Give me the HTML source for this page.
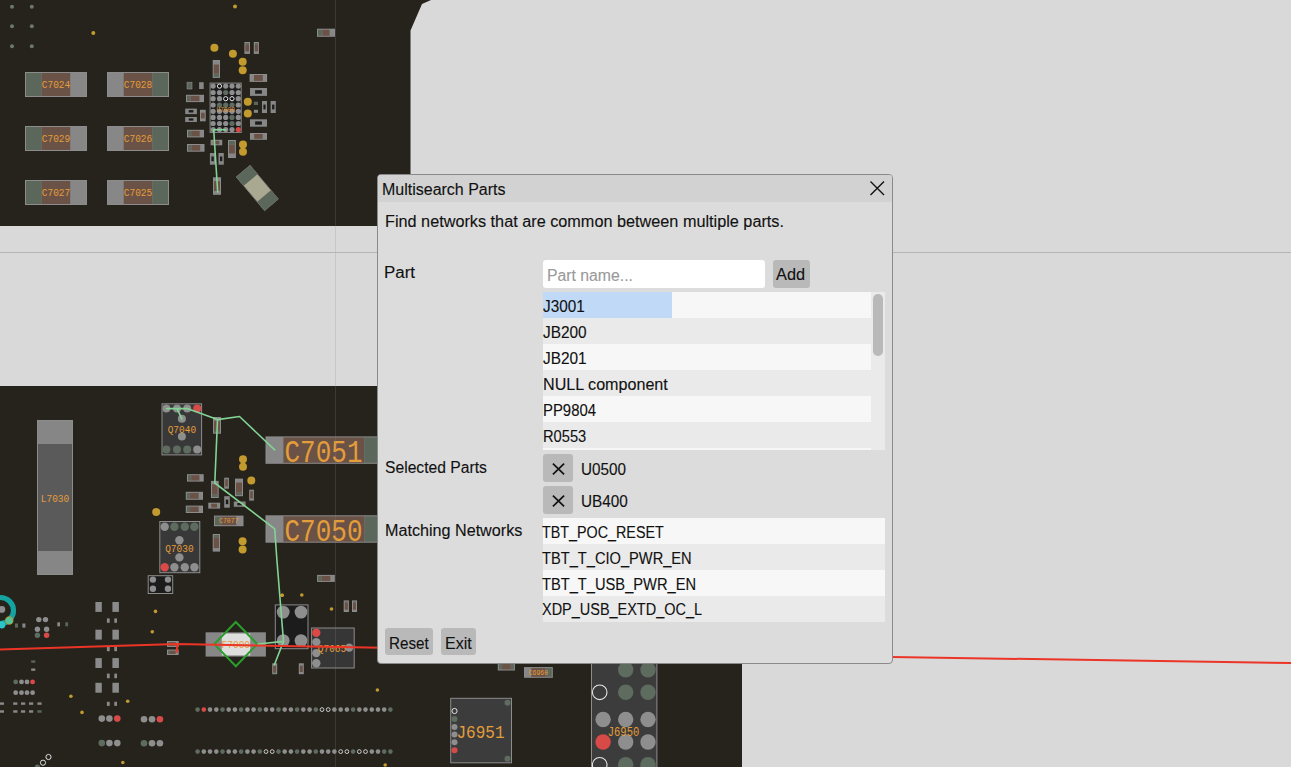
<!DOCTYPE html>
<html><head><meta charset="utf-8">
<style>
html,body{margin:0;padding:0;width:1291px;height:767px;overflow:hidden;background:#d9d9d9;font-family:"Liberation Sans",sans-serif;}
#pcb{position:absolute;left:0;top:0;}
.dlg{position:absolute;left:377px;top:174px;width:514px;height:488px;background:#dcdcdc;border:1px solid #8a8a8a;border-radius:4px;}
.tb{position:absolute;left:0;top:0;width:514px;height:27px;background:#d2d2d2;border-radius:3px 3px 0 0;}
.t{position:absolute;white-space:nowrap;color:#111;font-size:16px;line-height:16px;transform-origin:0 0;-webkit-text-stroke-width:0.12px;}
.btn{position:absolute;background:#b9b9b9;border-radius:3px;}
.row{position:absolute;height:26px;}
</style></head><body>
<svg id="pcb" width="1291" height="767" viewBox="0 0 1291 767">
  <!-- PCB blocks -->
  <polygon points="0,0 431,0 422,4 410.5,30.5 410.5,226 0,226" fill="#26231d"/>
  <rect x="0" y="386" width="742" height="381" fill="#26231d"/>
  <g id="parts">
<circle cx="12.0" cy="6.7" r="2" fill="#6c786d"/>
<circle cx="12.0" cy="26.3" r="2" fill="#6c786d"/>
<circle cx="12.0" cy="46.2" r="2" fill="#6c786d"/>
<circle cx="31.8" cy="6.7" r="2" fill="#6c786d"/>
<circle cx="31.8" cy="26.3" r="2" fill="#6c786d"/>
<circle cx="31.8" cy="46.2" r="2" fill="#6c786d"/>
<circle cx="93.3" cy="32.9" r="2" fill="#c29a2e"/>
<circle cx="235.0" cy="6.5" r="2" fill="#c29a2e"/>
<rect x="25.0" y="72.0" width="62.0" height="25.0" fill="#8c8c8c"/>
<rect x="26.0" y="73.0" width="15.7" height="23.0" fill="#5c675c"/>
<rect x="70.3" y="73.0" width="15.7" height="23.0" fill="#878787"/>
<rect x="41.7" y="73.0" width="28.5" height="23.0" fill="#6b5246"/>
<text transform="translate(56.0,87.9) scale(1,1.18)" font-family="Liberation Mono" font-size="9.5" fill="#e39d3a" text-anchor="middle" >C7024</text>
<rect x="107.0" y="72.0" width="62.0" height="25.0" fill="#8c8c8c"/>
<rect x="108.0" y="73.0" width="15.7" height="23.0" fill="#878787"/>
<rect x="152.3" y="73.0" width="15.7" height="23.0" fill="#5c675c"/>
<rect x="123.7" y="73.0" width="28.5" height="23.0" fill="#6b5246"/>
<text transform="translate(138.0,87.9) scale(1,1.18)" font-family="Liberation Mono" font-size="9.5" fill="#e39d3a" text-anchor="middle" >C7028</text>
<rect x="25.0" y="126.0" width="62.0" height="25.0" fill="#8c8c8c"/>
<rect x="26.0" y="127.0" width="15.7" height="23.0" fill="#5c675c"/>
<rect x="70.3" y="127.0" width="15.7" height="23.0" fill="#878787"/>
<rect x="41.7" y="127.0" width="28.5" height="23.0" fill="#6b5246"/>
<text transform="translate(56.0,141.9) scale(1,1.18)" font-family="Liberation Mono" font-size="9.5" fill="#e39d3a" text-anchor="middle" >C7029</text>
<rect x="107.0" y="126.0" width="62.0" height="25.0" fill="#8c8c8c"/>
<rect x="108.0" y="127.0" width="15.7" height="23.0" fill="#878787"/>
<rect x="152.3" y="127.0" width="15.7" height="23.0" fill="#5c675c"/>
<rect x="123.7" y="127.0" width="28.5" height="23.0" fill="#6b5246"/>
<text transform="translate(138.0,141.9) scale(1,1.18)" font-family="Liberation Mono" font-size="9.5" fill="#e39d3a" text-anchor="middle" >C7026</text>
<rect x="25.0" y="180.0" width="62.0" height="25.0" fill="#8c8c8c"/>
<rect x="26.0" y="181.0" width="15.7" height="23.0" fill="#5c675c"/>
<rect x="70.3" y="181.0" width="15.7" height="23.0" fill="#878787"/>
<rect x="41.7" y="181.0" width="28.5" height="23.0" fill="#6b5246"/>
<text transform="translate(56.0,195.9) scale(1,1.18)" font-family="Liberation Mono" font-size="9.5" fill="#e39d3a" text-anchor="middle" >C7027</text>
<rect x="107.0" y="180.0" width="62.0" height="25.0" fill="#8c8c8c"/>
<rect x="108.0" y="181.0" width="15.7" height="23.0" fill="#878787"/>
<rect x="152.3" y="181.0" width="15.7" height="23.0" fill="#5c675c"/>
<rect x="123.7" y="181.0" width="28.5" height="23.0" fill="#6b5246"/>
<text transform="translate(138.0,195.9) scale(1,1.18)" font-family="Liberation Mono" font-size="9.5" fill="#e39d3a" text-anchor="middle" >C7025</text>
<rect x="317.0" y="28.7" width="18.0" height="8.1" fill="#8c8c8c"/>
<rect x="318.0" y="29.7" width="4.4" height="6.1" fill="#5c675c"/>
<rect x="329.6" y="29.7" width="4.4" height="6.1" fill="#878787"/>
<rect x="322.4" y="29.7" width="7.2" height="6.1" fill="#6b5246"/>
<circle cx="214.4" cy="47.7" r="4" fill="#c29a2e"/>
<circle cx="232.9" cy="53.7" r="4" fill="#c29a2e"/>
<circle cx="242.7" cy="61.8" r="4" fill="#c29a2e"/>
<circle cx="242.7" cy="70.2" r="4" fill="#c29a2e"/>
<rect x="244.4" y="42.0" width="5.6" height="11.9" fill="#8c8c8c"/>
<rect x="245.4" y="43.0" width="3.6" height="1.4" fill="#5c675c"/>
<rect x="245.4" y="51.5" width="3.6" height="1.4" fill="#878787"/>
<rect x="245.4" y="44.4" width="3.6" height="7.1" fill="#6b5246"/>
<rect x="253.8" y="42.0" width="5.1" height="11.9" fill="#8c8c8c"/>
<rect x="254.8" y="43.0" width="3.1" height="1.4" fill="#5c675c"/>
<rect x="254.8" y="51.5" width="3.1" height="1.4" fill="#878787"/>
<rect x="254.8" y="44.4" width="3.1" height="7.1" fill="#6b5246"/>
<rect x="212.7" y="60.0" width="7.3" height="17.9" fill="#8c8c8c"/>
<rect x="213.7" y="61.0" width="5.3" height="3.5" fill="#878787"/>
<rect x="213.7" y="73.4" width="5.3" height="3.5" fill="#5c675c"/>
<rect x="213.7" y="64.5" width="5.3" height="9.0" fill="#6b5246"/>
<rect x="249.6" y="74.0" width="17.5" height="7.9" fill="#8c8c8c"/>
<rect x="250.6" y="75.0" width="3.4" height="5.9" fill="#878787"/>
<rect x="262.7" y="75.0" width="3.4" height="5.9" fill="#878787"/>
<rect x="254.0" y="75.0" width="8.8" height="5.9" fill="#6b5246"/>
<rect x="187.0" y="82.2" width="5.0" height="6.8" fill="#5c675c" stroke="#8c8c8c" stroke-width="0.6"/>
<rect x="199.1" y="82.2" width="4.6" height="6.8" fill="#878787"/>
<rect x="186.0" y="94.8" width="18.0" height="7.3" fill="#8c8c8c"/>
<rect x="187.0" y="95.8" width="3.5" height="5.3" fill="#5c675c"/>
<rect x="199.5" y="95.8" width="3.5" height="5.3" fill="#878787"/>
<rect x="190.5" y="95.8" width="9.0" height="5.3" fill="#6b5246"/>
<rect x="185.2" y="108.6" width="11.7" height="5.5" fill="#878787"/>
<rect x="188.7" y="110.1" width="4.7" height="2.4" fill="#1c1c1c"/>
<rect x="185.2" y="117.0" width="11.7" height="5.0" fill="#878787"/>
<rect x="188.7" y="118.4" width="4.7" height="2.2" fill="#1c1c1c"/>
<rect x="200.0" y="109.8" width="5.7" height="11.5" fill="#8c8c8c"/>
<rect x="201.0" y="110.8" width="3.7" height="1.9" fill="#878787"/>
<rect x="201.0" y="118.4" width="3.7" height="1.9" fill="#878787"/>
<rect x="201.0" y="112.7" width="3.7" height="5.8" fill="#6b5246"/>
<rect x="250.0" y="88.0" width="17.0" height="7.9" fill="#878787"/>
<rect x="255.1" y="90.2" width="6.8" height="3.5" fill="#1c1c1c"/>
<circle cx="247.8" cy="101.7" r="4" fill="#c29a2e"/>
<circle cx="247.8" cy="113.5" r="4" fill="#c29a2e"/>
<rect x="253.9" y="101.7" width="4.1" height="3.3" fill="#5c675c"/>
<rect x="253.9" y="109.8" width="4.1" height="3.0" fill="#878787"/>
<rect x="262.0" y="101.0" width="5.0" height="12.0" fill="#878787"/>
<rect x="263.4" y="104.6" width="2.2" height="4.8" fill="#1c1c1c"/>
<rect x="270.6" y="101.0" width="5.2" height="12.0" fill="#878787"/>
<rect x="272.1" y="104.6" width="2.3" height="4.8" fill="#1c1c1c"/>
<rect x="250.0" y="119.3" width="17.0" height="7.4" fill="#878787"/>
<rect x="255.1" y="121.4" width="6.8" height="3.3" fill="#1c1c1c"/>
<rect x="250.0" y="133.0" width="17.0" height="6.8" fill="#8c8c8c"/>
<rect x="251.0" y="134.0" width="3.2" height="4.8" fill="#878787"/>
<rect x="262.8" y="134.0" width="3.2" height="4.8" fill="#878787"/>
<rect x="254.2" y="134.0" width="8.5" height="4.8" fill="#6b5246"/>
<rect x="187.0" y="129.8" width="17.0" height="7.6" fill="#8c8c8c"/>
<rect x="188.0" y="130.8" width="3.2" height="5.6" fill="#5c675c"/>
<rect x="199.8" y="130.8" width="3.2" height="5.6" fill="#878787"/>
<rect x="191.2" y="130.8" width="8.5" height="5.6" fill="#6b5246"/>
<rect x="187.0" y="144.0" width="17.5" height="7.7" fill="#8c8c8c"/>
<rect x="188.0" y="145.0" width="3.4" height="5.7" fill="#5c675c"/>
<rect x="200.1" y="145.0" width="3.4" height="5.7" fill="#878787"/>
<rect x="191.4" y="145.0" width="8.8" height="5.7" fill="#6b5246"/>
<rect x="210.6" y="139.8" width="11.6" height="5.5" fill="#8c8c8c"/>
<rect x="211.6" y="140.8" width="1.9" height="3.5" fill="#878787"/>
<rect x="219.3" y="140.8" width="1.9" height="3.5" fill="#878787"/>
<rect x="213.5" y="140.8" width="5.8" height="3.5" fill="#6b5246"/>
<rect x="228.0" y="140.0" width="7.9" height="18.0" fill="#8c8c8c"/>
<rect x="229.0" y="141.0" width="5.9" height="3.5" fill="#5c675c"/>
<rect x="229.0" y="153.5" width="5.9" height="3.5" fill="#878787"/>
<rect x="229.0" y="144.5" width="5.9" height="9.0" fill="#6b5246"/>
<circle cx="243.0" cy="144.6" r="4" fill="#c29a2e"/>
<circle cx="243.0" cy="151.7" r="4" fill="#c29a2e"/>
<rect x="209.9" y="153.0" width="5.5" height="11.7" fill="#878787"/>
<rect x="211.4" y="156.5" width="2.4" height="4.7" fill="#1c1c1c"/>
<rect x="218.5" y="153.0" width="5.3" height="11.7" fill="#878787"/>
<rect x="220.0" y="156.5" width="2.3" height="4.7" fill="#1c1c1c"/>
<rect x="213.0" y="177.3" width="8.0" height="17.5" fill="#8c8c8c"/>
<rect x="214.0" y="178.3" width="6.0" height="2.8" fill="#878787"/>
<rect x="214.0" y="191.0" width="6.0" height="2.8" fill="#878787"/>
<rect x="214.0" y="181.2" width="6.0" height="9.8" fill="#6b5246"/>
<rect x="210.1" y="83.1" width="31.1" height="49.3" fill="#1c1c1c" stroke="#8c8c8c" stroke-width="1"/>
<circle cx="213.1" cy="86.1" r="2.6" fill="#8e8e8e"/>
<circle cx="219.5" cy="86.1" r="2.1" fill="#111" stroke="#e8e8e8" stroke-width="1"/>
<circle cx="225.7" cy="86.1" r="2.6" fill="#8e8e8e"/>
<circle cx="232.0" cy="86.1" r="2.6" fill="#8e8e8e"/>
<circle cx="238.3" cy="86.1" r="2.6" fill="#8e8e8e"/>
<circle cx="213.1" cy="92.5" r="2.6" fill="#8e8e8e"/>
<circle cx="219.5" cy="92.5" r="2.6" fill="#8e8e8e"/>
<circle cx="225.7" cy="92.5" r="2.6" fill="#5e6b5f"/>
<circle cx="232.0" cy="92.5" r="2.6" fill="#8e8e8e"/>
<circle cx="238.3" cy="92.5" r="2.6" fill="#8e8e8e"/>
<circle cx="213.1" cy="98.7" r="2.6" fill="#8e8e8e"/>
<circle cx="219.5" cy="98.7" r="2.6" fill="#8e8e8e"/>
<circle cx="225.7" cy="98.7" r="2.1" fill="#111" stroke="#e8e8e8" stroke-width="1"/>
<circle cx="232.0" cy="98.7" r="2.1" fill="#111" stroke="#e8e8e8" stroke-width="1"/>
<circle cx="238.3" cy="98.7" r="2.6" fill="#8e8e8e"/>
<circle cx="213.1" cy="105.0" r="2.6" fill="#8e8e8e"/>
<circle cx="219.5" cy="105.0" r="2.6" fill="#5e6b5f"/>
<circle cx="225.7" cy="105.0" r="2.6" fill="#5e6b5f"/>
<circle cx="232.0" cy="105.0" r="2.6" fill="#5e6b5f"/>
<circle cx="238.3" cy="105.0" r="2.6" fill="#8e8e8e"/>
<circle cx="213.1" cy="111.3" r="2.6" fill="#8e8e8e"/>
<circle cx="219.5" cy="111.3" r="2.6" fill="#8e8e8e"/>
<circle cx="225.7" cy="111.3" r="2.6" fill="#8e8e8e"/>
<circle cx="232.0" cy="111.3" r="2.6" fill="#8e8e8e"/>
<circle cx="238.3" cy="111.3" r="2.6" fill="#8e8e8e"/>
<circle cx="213.1" cy="117.4" r="2.6" fill="#8e8e8e"/>
<circle cx="219.5" cy="117.4" r="2.6" fill="#8e8e8e"/>
<circle cx="225.7" cy="117.4" r="2.6" fill="#8e8e8e"/>
<circle cx="232.0" cy="117.4" r="2.6" fill="#5e6b5f"/>
<circle cx="238.3" cy="117.4" r="2.6" fill="#8e8e8e"/>
<circle cx="213.1" cy="123.5" r="2.6" fill="#8e8e8e"/>
<circle cx="219.5" cy="123.5" r="2.6" fill="#8e8e8e"/>
<circle cx="225.7" cy="123.5" r="2.6" fill="#8e8e8e"/>
<circle cx="232.0" cy="123.5" r="2.6" fill="#5e6b5f"/>
<circle cx="238.3" cy="123.5" r="2.6" fill="#8e8e8e"/>
<circle cx="213.1" cy="129.6" r="2.6" fill="#8e8e8e"/>
<circle cx="219.5" cy="129.6" r="2.6" fill="#8e8e8e"/>
<circle cx="225.7" cy="129.6" r="2.6" fill="#8e8e8e"/>
<circle cx="232.0" cy="129.6" r="2.6" fill="#8e8e8e"/>
<circle cx="238.3" cy="129.6" r="2.6" fill="#dd4444"/>
<text transform="translate(225.7,111.5) scale(1,1.18)" font-family="Liberation Mono" font-size="6.2" fill="#e39d3a" text-anchor="middle" >U7000</text>
<polyline points="225.9,129.8 213.7,129.8 217.7,192.0" fill="none" stroke="#82d394" stroke-width="1.6" stroke-linejoin="round" stroke-linecap="round"/>
<g transform="translate(257.3,188) rotate(50)"><rect x="-22" y="-9" width="44" height="18" fill="#a9a891" stroke="#777" stroke-width="0.8"/><rect x="-22" y="-9" width="11.5" height="18" fill="#5c675c"/><rect x="10.5" y="-9" width="11.5" height="18" fill="#5c675c"/></g>
<rect x="37.0" y="420.0" width="36.0" height="155.0" fill="#8c8c8c"/>
<rect x="38.0" y="421.0" width="34.0" height="23.0" fill="#868686"/>
<rect x="38.0" y="551.0" width="34.0" height="23.0" fill="#868686"/>
<rect x="38.0" y="444.0" width="34.0" height="107.0" fill="#5a5a5a"/>
<text transform="translate(55.0,502.0) scale(1,1.18)" font-family="Liberation Mono" font-size="9.5" fill="#e39d3a" text-anchor="middle" >L7030</text>
<rect x="162.0" y="403.8" width="39.6" height="51.1" fill="#383838" stroke="#8c8c8c" stroke-width="1"/>
<circle cx="166.4" cy="408.6" r="4" fill="#8e8e8e"/>
<circle cx="177.0" cy="408.6" r="4" fill="#8e8e8e"/>
<circle cx="187.2" cy="408.6" r="4" fill="#8e8e8e"/>
<circle cx="197.2" cy="408.6" r="4" fill="#d84a48"/>
<circle cx="166.4" cy="449.6" r="4" fill="#5e6b5f"/>
<circle cx="177.0" cy="449.6" r="4" fill="#5e6b5f"/>
<circle cx="187.2" cy="449.6" r="4" fill="#5e6b5f"/>
<circle cx="197.2" cy="449.6" r="4" fill="#8e8e8e"/>
<circle cx="181.9" cy="418.8" r="4" fill="#8e8e8e"/>
<circle cx="181.9" cy="436.4" r="4" fill="#8e8e8e"/>
<text transform="translate(181.9,433.0) scale(1,1.18)" font-family="Liberation Mono" font-size="9.5" fill="#e39d3a" text-anchor="middle" >Q7040</text>
<rect x="213.0" y="417.0" width="8.0" height="16.7" fill="#8c8c8c"/>
<rect x="214.0" y="418.0" width="6.0" height="2.7" fill="#878787"/>
<rect x="214.0" y="430.0" width="6.0" height="2.7" fill="#5c675c"/>
<rect x="214.0" y="420.7" width="6.0" height="9.4" fill="#6b5246"/>
<rect x="265.5" y="436.4" width="114.5" height="27.4" fill="#8c8c8c"/>
<rect x="266.5" y="437.4" width="16.9" height="25.4" fill="#878787"/>
<rect x="283.4" y="437.4" width="81.1" height="25.4" fill="#6b5246"/>
<rect x="364.5" y="437.4" width="15.5" height="25.4" fill="#5c675c"/>
<text transform="translate(323.5,462.0) scale(1,1.18)" font-family="Liberation Mono" font-size="26" fill="#e39d3a" text-anchor="middle" >C7051</text>
<rect x="265.5" y="515.3" width="114.5" height="27.4" fill="#8c8c8c"/>
<rect x="266.5" y="516.3" width="16.9" height="25.4" fill="#878787"/>
<rect x="283.4" y="516.3" width="81.1" height="25.4" fill="#6b5246"/>
<rect x="364.5" y="516.3" width="15.5" height="25.4" fill="#5c675c"/>
<text transform="translate(323.5,540.9) scale(1,1.18)" font-family="Liberation Mono" font-size="26" fill="#e39d3a" text-anchor="middle" >C7050</text>
<circle cx="243.0" cy="459.3" r="4" fill="#c29a2e"/>
<circle cx="243.0" cy="466.8" r="4" fill="#c29a2e"/>
<circle cx="251.3" cy="480.4" r="4" fill="#c29a2e"/>
<circle cx="156.2" cy="512.0" r="4" fill="#c29a2e"/>
<rect x="187.0" y="474.2" width="16.7" height="7.4" fill="#8c8c8c"/>
<rect x="188.0" y="475.2" width="3.2" height="5.4" fill="#5c675c"/>
<rect x="199.5" y="475.2" width="3.2" height="5.4" fill="#878787"/>
<rect x="191.2" y="475.2" width="8.3" height="5.4" fill="#6b5246"/>
<rect x="185.8" y="491.8" width="17.2" height="8.0" fill="#8c8c8c"/>
<rect x="186.8" y="492.8" width="3.3" height="6.0" fill="#5c675c"/>
<rect x="198.7" y="492.8" width="3.3" height="6.0" fill="#878787"/>
<rect x="190.1" y="492.8" width="8.6" height="6.0" fill="#6b5246"/>
<rect x="185.8" y="505.6" width="17.2" height="7.4" fill="#8c8c8c"/>
<rect x="186.8" y="506.6" width="3.3" height="5.4" fill="#5c675c"/>
<rect x="198.7" y="506.6" width="3.3" height="5.4" fill="#878787"/>
<rect x="190.1" y="506.6" width="8.6" height="5.4" fill="#6b5246"/>
<rect x="211.0" y="480.9" width="7.7" height="17.1" fill="#8c8c8c"/>
<rect x="212.0" y="481.9" width="5.7" height="2.4" fill="#878787"/>
<rect x="212.0" y="494.6" width="5.7" height="2.4" fill="#5c675c"/>
<rect x="212.0" y="484.3" width="5.7" height="10.3" fill="#6b5246"/>
<rect x="224.2" y="477.7" width="4.7" height="11.0" fill="#8c8c8c"/>
<rect x="225.2" y="478.7" width="2.7" height="1.2" fill="#5c675c"/>
<rect x="225.2" y="486.5" width="2.7" height="1.2" fill="#878787"/>
<rect x="225.2" y="479.9" width="2.7" height="6.6" fill="#6b5246"/>
<rect x="235.0" y="478.6" width="8.0" height="17.6" fill="#8c8c8c"/>
<rect x="236.0" y="479.6" width="6.0" height="2.9" fill="#878787"/>
<rect x="236.0" y="492.3" width="6.0" height="2.9" fill="#5c675c"/>
<rect x="236.0" y="482.5" width="6.0" height="9.9" fill="#6b5246"/>
<rect x="249.2" y="489.7" width="4.7" height="10.9" fill="#8c8c8c"/>
<rect x="250.2" y="490.7" width="2.7" height="1.2" fill="#5c675c"/>
<rect x="250.2" y="498.4" width="2.7" height="1.2" fill="#878787"/>
<rect x="250.2" y="491.9" width="2.7" height="6.5" fill="#6b5246"/>
<rect x="224.2" y="496.2" width="5.6" height="11.5" fill="#878787"/>
<rect x="225.8" y="499.6" width="2.5" height="4.6" fill="#1c1c1c"/>
<rect x="208.3" y="502.7" width="11.8" height="5.9" fill="#8c8c8c"/>
<rect x="209.3" y="503.7" width="1.9" height="3.9" fill="#878787"/>
<rect x="217.2" y="503.7" width="1.9" height="3.9" fill="#878787"/>
<rect x="211.2" y="503.7" width="5.9" height="3.9" fill="#6b5246"/>
<rect x="233.8" y="501.5" width="11.8" height="5.3" fill="#878787"/>
<rect x="237.3" y="503.0" width="4.7" height="2.3" fill="#1c1c1c"/>
<rect x="214.0" y="515.6" width="29.5" height="10.6" fill="#8c8c8c"/>
<rect x="215.0" y="516.6" width="6.4" height="8.6" fill="#5c675c"/>
<rect x="236.1" y="516.6" width="6.4" height="8.6" fill="#878787"/>
<rect x="221.4" y="516.6" width="14.8" height="8.6" fill="#6b5246"/>
<text transform="translate(228.8,523.2) scale(1,1.18)" font-family="Liberation Mono" font-size="6.5" fill="#e39d3a" text-anchor="middle" >C7077</text>
<rect x="159.8" y="521.5" width="40.0" height="51.2" fill="#383838" stroke="#8c8c8c" stroke-width="1"/>
<circle cx="164.7" cy="526.8" r="4.2" fill="#8e8e8e"/>
<circle cx="174.4" cy="526.8" r="4.2" fill="#5e6b5f"/>
<circle cx="184.8" cy="526.8" r="4.2" fill="#5e6b5f"/>
<circle cx="194.4" cy="526.8" r="4.2" fill="#5e6b5f"/>
<circle cx="164.7" cy="567.3" r="4.2" fill="#d84a48"/>
<circle cx="174.4" cy="567.3" r="4.2" fill="#8e8e8e"/>
<circle cx="184.8" cy="567.3" r="4.2" fill="#8e8e8e"/>
<circle cx="194.4" cy="567.3" r="4.2" fill="#8e8e8e"/>
<circle cx="179.4" cy="540.2" r="4.2" fill="#8e8e8e"/>
<circle cx="179.4" cy="557.4" r="4.2" fill="#8e8e8e"/>
<text transform="translate(179.4,551.5) scale(1,1.18)" font-family="Liberation Mono" font-size="9.5" fill="#e39d3a" text-anchor="middle" >Q7030</text>
<rect x="148.2" y="575.7" width="24.5" height="17.8" fill="#1c1c1c" stroke="#8c8c8c" stroke-width="1"/>
<circle cx="152.9" cy="579.6" r="3.2" fill="#8e8e8e"/>
<circle cx="152.9" cy="588.8" r="3.2" fill="#8e8e8e"/>
<circle cx="168.0" cy="579.6" r="3.2" fill="#8e8e8e"/>
<circle cx="168.0" cy="588.8" r="3.2" fill="#8e8e8e"/>
<rect x="212.7" y="534.0" width="7.3" height="17.6" fill="#8c8c8c"/>
<rect x="213.7" y="535.0" width="5.3" height="2.5" fill="#5c675c"/>
<rect x="213.7" y="548.1" width="5.3" height="2.5" fill="#878787"/>
<rect x="213.7" y="537.5" width="5.3" height="10.6" fill="#6b5246"/>
<circle cx="242.6" cy="541.3" r="4" fill="#c29a2e"/>
<circle cx="242.6" cy="549.4" r="4" fill="#c29a2e"/>
<circle cx="155.5" cy="611.4" r="1.8" fill="#c29a2e"/>
<circle cx="152.3" cy="631.8" r="1.8" fill="#c29a2e"/>
<circle cx="282.0" cy="595.3" r="1.8" fill="#c29a2e"/>
<circle cx="282.2" cy="595.2" r="1.8" fill="#c29a2e"/>
<circle cx="301.8" cy="595.0" r="1.8" fill="#c29a2e"/>
<circle cx="331.5" cy="609.0" r="1.8" fill="#c29a2e"/>
<rect x="205.6" y="632.3" width="60.3" height="24.3" fill="#878787"/>
<rect x="221.8" y="633.5" width="28.4" height="21.9" fill="#dedede"/>
<text transform="translate(235.8,648.0) scale(1,1.18)" font-family="Liberation Mono" font-size="9.5" fill="#e39d3a" text-anchor="middle" >F7000</text>
<polygon points="235.8,622 257.3,644.1 235.8,666.2 214.3,644.1" fill="none" stroke="#2a9e2a" stroke-width="2"/>
<rect x="167.0" y="641.0" width="11.7" height="6.0" fill="#8c8c8c"/>
<rect x="168.0" y="642.0" width="1.9" height="4.0" fill="#5c675c"/>
<rect x="175.8" y="642.0" width="1.9" height="4.0" fill="#878787"/>
<rect x="169.9" y="642.0" width="5.8" height="4.0" fill="#6b5246"/>
<rect x="167.0" y="649.5" width="11.7" height="5.5" fill="#8c8c8c"/>
<rect x="168.0" y="650.5" width="1.9" height="3.5" fill="#5c675c"/>
<rect x="175.8" y="650.5" width="1.9" height="3.5" fill="#878787"/>
<rect x="169.9" y="650.5" width="5.8" height="3.5" fill="#6b5246"/>
<rect x="275.3" y="604.9" width="32.7" height="43.8" fill="#1c1c1c" stroke="#8c8c8c" stroke-width="1"/>
<circle cx="283.2" cy="612.1" r="6.4" fill="#8e8e8e"/>
<circle cx="283.2" cy="640.6" r="6.4" fill="#8e8e8e"/>
<circle cx="301.0" cy="612.1" r="6.4" fill="#8e8e8e"/>
<circle cx="301.0" cy="640.6" r="6.4" fill="#8e8e8e"/>
<rect x="311.6" y="628.0" width="42.6" height="40.0" fill="#363636" stroke="#8c8c8c" stroke-width="1"/>
<circle cx="316.3" cy="632.7" r="4.2" fill="#d84a48"/>
<circle cx="316.3" cy="642.1" r="4.2" fill="#8e8e8e"/>
<circle cx="316.3" cy="653.1" r="4.2" fill="#8e8e8e"/>
<circle cx="316.3" cy="663.3" r="4.2" fill="#8e8e8e"/>
<circle cx="349.2" cy="647.6" r="4.2" fill="#8e8e8e"/>
<text transform="translate(332.0,652.0) scale(1,1.18)" font-family="Liberation Mono" font-size="9.5" fill="#e39d3a" text-anchor="middle" >Q7065</text>
<rect x="317.1" y="574.9" width="17.7" height="7.0" fill="#8c8c8c"/>
<rect x="318.1" y="575.9" width="3.4" height="5.0" fill="#5c675c"/>
<rect x="330.4" y="575.9" width="3.4" height="5.0" fill="#878787"/>
<rect x="321.5" y="575.9" width="8.8" height="5.0" fill="#6b5246"/>
<rect x="343.7" y="600.4" width="5.2" height="11.6" fill="#8c8c8c"/>
<rect x="344.7" y="601.4" width="3.2" height="1.3" fill="#5c675c"/>
<rect x="344.7" y="609.7" width="3.2" height="1.3" fill="#878787"/>
<rect x="344.7" y="602.7" width="3.2" height="7.0" fill="#6b5246"/>
<rect x="352.0" y="600.4" width="5.0" height="11.6" fill="#8c8c8c"/>
<rect x="353.0" y="601.4" width="3.0" height="1.3" fill="#5c675c"/>
<rect x="353.0" y="609.7" width="3.0" height="1.3" fill="#878787"/>
<rect x="353.0" y="602.7" width="3.0" height="7.0" fill="#6b5246"/>
<rect x="272.2" y="663.3" width="5.0" height="10.9" fill="#8c8c8c"/>
<rect x="273.2" y="664.3" width="3.0" height="1.2" fill="#878787"/>
<rect x="273.2" y="672.0" width="3.0" height="1.2" fill="#5c675c"/>
<rect x="273.2" y="665.5" width="3.0" height="6.5" fill="#6b5246"/>
<rect x="298.8" y="663.3" width="5.0" height="10.9" fill="#8c8c8c"/>
<rect x="299.8" y="664.3" width="3.0" height="1.2" fill="#878787"/>
<rect x="299.8" y="672.0" width="3.0" height="1.2" fill="#878787"/>
<rect x="299.8" y="665.5" width="3.0" height="6.5" fill="#6b5246"/>
<polyline points="166.4,408.6 187.2,408.6 217.5,419.6 239.5,416.5 274.7,449.9" fill="none" stroke="#82d394" stroke-width="1.6" stroke-linejoin="round" stroke-linecap="round"/>
<polyline points="177.0,408.6 181.9,418.8" fill="none" stroke="#82d394" stroke-width="1.6" stroke-linejoin="round" stroke-linecap="round"/>
<polyline points="217.5,419.6 214.8,483.0 274.7,528.8 276.9,560.0 283.5,641.4 258.0,644.0" fill="none" stroke="#82d394" stroke-width="1.6" stroke-linejoin="round" stroke-linecap="round"/>
<polyline points="283.5,641.4 274.4,664.8" fill="none" stroke="#82d394" stroke-width="1.6" stroke-linejoin="round" stroke-linecap="round"/>
<circle cx="0.5" cy="610.5" r="13" fill="none" stroke="#15a39f" stroke-width="5.2"/>
<circle cx="1.8" cy="609.4" r="3.4" fill="#8e8e8e"/>
<circle cx="9.3" cy="620.5" r="4.2" fill="#c48a2e"/>
<circle cx="9.3" cy="620.5" r="3.5" fill="#52c496"/>
<circle cx="1.8" cy="624.8" r="3.6" fill="#2cc6c6"/>
<rect x="95.4" y="602.0" width="6.4" height="9.9" fill="#8a8a8a"/>
<rect x="112.4" y="602.0" width="6.5" height="9.9" fill="#8a8a8a"/>
<rect x="95.4" y="629.7" width="6.4" height="9.9" fill="#8a8a8a"/>
<rect x="112.4" y="629.7" width="6.5" height="9.9" fill="#8a8a8a"/>
<rect x="95.4" y="658.1" width="6.4" height="9.9" fill="#8a8a8a"/>
<rect x="112.4" y="658.1" width="6.5" height="9.9" fill="#8a8a8a"/>
<rect x="95.4" y="682.8" width="6.4" height="9.9" fill="#8a8a8a"/>
<rect x="112.4" y="682.8" width="6.5" height="9.9" fill="#8a8a8a"/>
<rect x="106.9" y="618.4" width="2.8" height="4.4" fill="#8a8a8a"/>
<rect x="114.3" y="618.4" width="2.7" height="4.4" fill="#8a8a8a"/>
<rect x="106.9" y="646.6" width="2.8" height="4.6" fill="#8a8a8a"/>
<rect x="114.3" y="646.6" width="2.7" height="4.6" fill="#8a8a8a"/>
<rect x="106.9" y="673.6" width="2.8" height="4.6" fill="#8a8a8a"/>
<rect x="114.3" y="673.6" width="2.7" height="4.6" fill="#8a8a8a"/>
<rect x="106.9" y="701.8" width="2.8" height="4.1" fill="#8a8a8a"/>
<rect x="114.3" y="701.8" width="2.7" height="4.1" fill="#8a8a8a"/>
<rect x="15.0" y="623.5" width="3.0" height="4.1" fill="#5c675c"/>
<rect x="22.4" y="623.5" width="3.0" height="4.1" fill="#8a8a8a"/>
<rect x="57.3" y="622.3" width="2.7" height="4.0" fill="#8a8a8a"/>
<rect x="65.3" y="622.3" width="2.8" height="4.0" fill="#5c675c"/>
<circle cx="38.8" cy="619.6" r="2.7" fill="#8e8e8e"/>
<circle cx="45.5" cy="619.6" r="2.7" fill="#8e8e8e"/>
<circle cx="37.4" cy="629.3" r="2.7" fill="#8e8e8e"/>
<circle cx="46.6" cy="629.3" r="2.7" fill="#8e8e8e"/>
<circle cx="37.4" cy="635.3" r="2.7" fill="#5e6b5f"/>
<circle cx="46.6" cy="635.3" r="2.7" fill="#d84a48"/>
<rect x="31.2" y="660.4" width="4.1" height="2.3" fill="#5c675c"/>
<rect x="31.2" y="668.5" width="4.1" height="2.3" fill="#8a8a8a"/>
<circle cx="15.7" cy="681.9" r="2.4" fill="#5e6b5f"/>
<circle cx="21.5" cy="681.9" r="2.4" fill="#8e8e8e"/>
<circle cx="27.0" cy="681.9" r="2.4" fill="#8e8e8e"/>
<circle cx="32.6" cy="681.9" r="2.4" fill="#d84a48"/>
<circle cx="15.7" cy="692.7" r="2.4" fill="#8e8e8e"/>
<circle cx="21.5" cy="692.7" r="2.4" fill="#8e8e8e"/>
<circle cx="27.0" cy="692.7" r="2.4" fill="#8e8e8e"/>
<circle cx="32.6" cy="692.7" r="2.4" fill="#8e8e8e"/>
<rect x="0.0" y="702.4" width="4.0" height="2.4" fill="#8a8a8a"/>
<rect x="13.2" y="702.4" width="4.2" height="2.4" fill="#8a8a8a"/>
<rect x="21.0" y="702.4" width="4.2" height="2.4" fill="#8a8a8a"/>
<rect x="29.0" y="702.4" width="4.2" height="2.4" fill="#8a8a8a"/>
<rect x="37.4" y="702.4" width="4.2" height="2.4" fill="#8a8a8a"/>
<rect x="0.0" y="710.3" width="4.0" height="2.4" fill="#8a8a8a"/>
<rect x="13.2" y="710.3" width="4.2" height="2.4" fill="#8a8a8a"/>
<rect x="21.0" y="710.3" width="4.2" height="2.4" fill="#8a8a8a"/>
<rect x="29.0" y="710.3" width="4.2" height="2.4" fill="#8a8a8a"/>
<rect x="37.4" y="710.3" width="4.2" height="2.4" fill="#5c675c"/>
<circle cx="70.9" cy="696.2" r="1.8" fill="#c29a2e"/>
<circle cx="82.0" cy="712.4" r="1.8" fill="#c29a2e"/>
<circle cx="127.7" cy="701.3" r="1.8" fill="#c29a2e"/>
<circle cx="122.8" cy="762.5" r="1.8" fill="#c29a2e"/>
<circle cx="101.8" cy="718.6" r="3.3" fill="#8e8e8e"/>
<circle cx="109.4" cy="718.6" r="3.3" fill="#8e8e8e"/>
<circle cx="117.3" cy="718.6" r="3.3" fill="#d84a48"/>
<circle cx="101.8" cy="743.1" r="3.3" fill="#5e6b5f"/>
<circle cx="109.4" cy="743.1" r="3.3" fill="#8e8e8e"/>
<circle cx="117.3" cy="743.1" r="3.3" fill="#8e8e8e"/>
<circle cx="144.0" cy="719.2" r="3.3" fill="#8e8e8e"/>
<circle cx="152.0" cy="719.2" r="3.3" fill="#8e8e8e"/>
<circle cx="159.9" cy="719.2" r="3.3" fill="#d84a48"/>
<circle cx="144.0" cy="743.2" r="3.3" fill="#5e6b5f"/>
<circle cx="152.0" cy="743.2" r="3.3" fill="#8e8e8e"/>
<circle cx="159.9" cy="743.2" r="3.3" fill="#8e8e8e"/>
<circle cx="48.5" cy="757.0" r="2.6" fill="none" stroke="#dddddd" stroke-width="1"/>
<circle cx="43.0" cy="762.7" r="2.6" fill="none" stroke="#dddddd" stroke-width="1"/>
<circle cx="37.4" cy="767.0" r="2.6" fill="#5e6b5f"/>
<circle cx="197.6" cy="709.6" r="2.3" fill="#5e6b5f"/>
<circle cx="203.8" cy="709.6" r="2.3" fill="#d84a48"/>
<circle cx="210.0" cy="709.6" r="2.3" fill="#8e8e8e"/>
<circle cx="216.3" cy="709.6" r="2.3" fill="#8e8e8e"/>
<circle cx="222.5" cy="709.6" r="2.3" fill="#5e6b5f"/>
<circle cx="228.7" cy="709.6" r="2.3" fill="#8e8e8e"/>
<circle cx="234.9" cy="709.6" r="2.3" fill="#8e8e8e"/>
<circle cx="241.1" cy="709.6" r="2.3" fill="#5e6b5f"/>
<circle cx="247.4" cy="709.6" r="2.3" fill="#8e8e8e"/>
<circle cx="253.6" cy="709.6" r="2.3" fill="#8e8e8e"/>
<circle cx="259.8" cy="709.6" r="2.3" fill="#5e6b5f"/>
<circle cx="266.0" cy="709.6" r="2.3" fill="#8e8e8e"/>
<circle cx="272.2" cy="709.6" r="2.3" fill="#8e8e8e"/>
<circle cx="278.5" cy="709.6" r="2.3" fill="#5e6b5f"/>
<circle cx="284.7" cy="709.6" r="2.3" fill="#8e8e8e"/>
<circle cx="290.9" cy="709.6" r="2.3" fill="#8e8e8e"/>
<circle cx="297.1" cy="709.6" r="2.3" fill="#5e6b5f"/>
<circle cx="303.3" cy="709.6" r="2.3" fill="#8e8e8e"/>
<circle cx="309.6" cy="709.6" r="2.3" fill="#8e8e8e"/>
<circle cx="315.8" cy="709.6" r="2.3" fill="#5e6b5f"/>
<circle cx="322.0" cy="709.6" r="1.9" fill="none" stroke="#dddddd" stroke-width="0.9"/>
<circle cx="328.2" cy="709.6" r="1.9" fill="none" stroke="#dddddd" stroke-width="0.9"/>
<circle cx="334.4" cy="709.6" r="2.3" fill="#8e8e8e"/>
<circle cx="340.7" cy="709.6" r="2.3" fill="#8e8e8e"/>
<circle cx="346.9" cy="709.6" r="2.3" fill="#8e8e8e"/>
<circle cx="353.1" cy="709.6" r="2.3" fill="#5e6b5f"/>
<circle cx="359.3" cy="709.6" r="2.3" fill="#8e8e8e"/>
<circle cx="365.5" cy="709.6" r="2.3" fill="#8e8e8e"/>
<circle cx="371.8" cy="709.6" r="2.3" fill="#8e8e8e"/>
<circle cx="378.0" cy="709.6" r="2.3" fill="#8e8e8e"/>
<circle cx="384.2" cy="709.6" r="2.3" fill="#8e8e8e"/>
<circle cx="390.4" cy="709.6" r="2.3" fill="#5e6b5f"/>
<circle cx="197.6" cy="751.6" r="2.3" fill="#5e6b5f"/>
<circle cx="203.8" cy="751.6" r="2.3" fill="#8e8e8e"/>
<circle cx="210.0" cy="751.6" r="2.3" fill="#8e8e8e"/>
<circle cx="216.3" cy="751.6" r="2.3" fill="#8e8e8e"/>
<circle cx="222.5" cy="751.6" r="2.3" fill="#5e6b5f"/>
<circle cx="228.7" cy="751.6" r="2.3" fill="#8e8e8e"/>
<circle cx="234.9" cy="751.6" r="2.3" fill="#8e8e8e"/>
<circle cx="241.1" cy="751.6" r="2.3" fill="#5e6b5f"/>
<circle cx="247.4" cy="751.6" r="2.3" fill="#8e8e8e"/>
<circle cx="253.6" cy="751.6" r="2.3" fill="#8e8e8e"/>
<circle cx="259.8" cy="751.6" r="2.3" fill="#5e6b5f"/>
<circle cx="266.0" cy="751.6" r="1.9" fill="none" stroke="#dddddd" stroke-width="0.9"/>
<circle cx="272.2" cy="751.6" r="1.9" fill="none" stroke="#dddddd" stroke-width="0.9"/>
<circle cx="278.5" cy="751.6" r="2.3" fill="#5e6b5f"/>
<circle cx="284.7" cy="751.6" r="2.3" fill="#8e8e8e"/>
<circle cx="290.9" cy="751.6" r="2.3" fill="#8e8e8e"/>
<circle cx="297.1" cy="751.6" r="2.3" fill="#5e6b5f"/>
<circle cx="303.3" cy="751.6" r="2.3" fill="#8e8e8e"/>
<circle cx="309.6" cy="751.6" r="2.3" fill="#8e8e8e"/>
<circle cx="315.8" cy="751.6" r="2.3" fill="#5e6b5f"/>
<circle cx="322.0" cy="751.6" r="2.3" fill="#8e8e8e"/>
<circle cx="328.2" cy="751.6" r="2.3" fill="#8e8e8e"/>
<circle cx="334.4" cy="751.6" r="2.3" fill="#8e8e8e"/>
<circle cx="340.7" cy="751.6" r="1.9" fill="none" stroke="#dddddd" stroke-width="0.9"/>
<circle cx="346.9" cy="751.6" r="1.9" fill="none" stroke="#dddddd" stroke-width="0.9"/>
<circle cx="353.1" cy="751.6" r="2.3" fill="#5e6b5f"/>
<circle cx="359.3" cy="751.6" r="1.9" fill="none" stroke="#dddddd" stroke-width="0.9"/>
<circle cx="365.5" cy="751.6" r="1.9" fill="none" stroke="#dddddd" stroke-width="0.9"/>
<circle cx="371.8" cy="751.6" r="2.3" fill="#8e8e8e"/>
<circle cx="378.0" cy="751.6" r="2.3" fill="#8e8e8e"/>
<circle cx="384.2" cy="751.6" r="2.3" fill="#5e6b5f"/>
<circle cx="390.4" cy="751.6" r="2.3" fill="#5e6b5f"/>
<circle cx="377.4" cy="690.0" r="1.8" fill="#c29a2e"/>
<circle cx="385.2" cy="765.0" r="1.8" fill="#c29a2e"/>
<rect x="497.8" y="658.0" width="17.1" height="12.5" fill="#8c8c8c"/>
<rect x="498.8" y="659.0" width="3.3" height="10.5" fill="#5c675c"/>
<rect x="510.6" y="659.0" width="3.3" height="10.5" fill="#5c675c"/>
<rect x="502.1" y="659.0" width="8.6" height="10.5" fill="#6b5246"/>
<rect x="524.0" y="667.1" width="28.8" height="10.7" fill="#8c8c8c"/>
<rect x="525.0" y="668.1" width="6.2" height="8.7" fill="#878787"/>
<rect x="545.6" y="668.1" width="6.2" height="8.7" fill="#5c675c"/>
<rect x="531.2" y="668.1" width="14.4" height="8.7" fill="#6b5246"/>
<text transform="translate(538.4,674.8) scale(1,1.18)" font-family="Liberation Mono" font-size="6.5" fill="#e39d3a" text-anchor="middle" >C6960</text>
<rect x="450.7" y="698.3" width="60.8" height="64.5" fill="#3c3c3c" stroke="#8c8c8c" stroke-width="1"/>
<circle cx="454.5" cy="711.0" r="2.6" fill="none" stroke="#e0e0e0" stroke-width="1"/>
<circle cx="454.5" cy="719.0" r="3" fill="#5e6b5f"/>
<circle cx="454.5" cy="726.9" r="3" fill="#8e8e8e"/>
<circle cx="454.5" cy="734.6" r="3" fill="#8e8e8e"/>
<circle cx="454.5" cy="742.2" r="3" fill="#8e8e8e"/>
<circle cx="454.5" cy="750.3" r="3" fill="#d84a48"/>
<circle cx="507.5" cy="702.7" r="3" fill="#5e6b5f"/>
<circle cx="507.5" cy="758.7" r="3" fill="#5e6b5f"/>
<text transform="translate(480.5,737.5) scale(1,1.18)" font-family="Liberation Mono" font-size="16" fill="#e39d3a" text-anchor="middle" >J6951</text>
<rect x="591.5" y="640.0" width="65.4" height="140.0" fill="#3c3c3c" stroke="#8c8c8c" stroke-width="1"/>
<circle cx="625.7" cy="669.7" r="7.7" fill="#5e6b5f"/>
<circle cx="648.0" cy="669.7" r="7.7" fill="#5e6b5f"/>
<circle cx="599.7" cy="692.3" r="7.3" fill="none" stroke="#e6e6e6" stroke-width="1.1"/>
<circle cx="625.7" cy="692.3" r="7.7" fill="#5e6b5f"/>
<circle cx="648.0" cy="692.3" r="7.7" fill="#5e6b5f"/>
<circle cx="603.1" cy="719.5" r="7.7" fill="#8e8e8e"/>
<circle cx="625.7" cy="719.5" r="7.7" fill="#8e8e8e"/>
<circle cx="648.0" cy="719.5" r="7.7" fill="#8e8e8e"/>
<circle cx="603.1" cy="742.0" r="7.7" fill="#d84a48"/>
<circle cx="625.7" cy="742.0" r="7.7" fill="#8e8e8e"/>
<circle cx="648.0" cy="742.0" r="7.7" fill="#8e8e8e"/>
<circle cx="599.7" cy="764.8" r="7.3" fill="none" stroke="#e6e6e6" stroke-width="1.1"/>
<circle cx="625.7" cy="764.8" r="7.7" fill="#5e6b5f"/>
<circle cx="648.0" cy="764.8" r="7.7" fill="#5e6b5f"/>
<text transform="translate(623.5,735.5) scale(1,1.18)" font-family="Liberation Mono" font-size="10.5" fill="#e39d3a" text-anchor="middle" >J6950</text>
</g>
  <!-- grid lines -->
  <line x1="335.5" y1="0" x2="335.5" y2="767" stroke="#898989" stroke-opacity="0.22" stroke-width="1"/>
  <line x1="0" y1="252.5" x2="1291" y2="252.5" stroke="#b4b4b4" stroke-width="1"/>
  <!-- red line -->
  <line x1="177.1" y1="643.5" x2="177.1" y2="652.6" stroke="#ec3427" stroke-width="2"/>
  <polyline points="0,649.5 177,644 892,657 1291,663" fill="none" stroke="#ec3427" stroke-width="2"/>
</svg>

<div class="dlg">
  <div class="tb"></div>
</div>
<div id="dc" style="position:absolute;left:0;top:0;">
<div style="position:absolute;left:543.0px;top:260.0px;width:222.1px;height:27.6px;background:#ffffff;border-radius:3px"></div>
<div style="position:absolute;left:773.0px;top:260.0px;width:36.7px;height:27.6px;background:#b9b9b9;border-radius:3px"></div>
<div style="position:absolute;left:543.0px;top:292.0px;width:341.6px;height:158.0px;background:#eaeaea;border-radius:0px"></div>
<div style="position:absolute;left:543.0px;top:292.0px;width:328.0px;height:26.0px;background:#f7f7f7;border-radius:0px"></div>
<div style="position:absolute;left:543.0px;top:344.0px;width:328.0px;height:26.0px;background:#f7f7f7;border-radius:0px"></div>
<div style="position:absolute;left:543.0px;top:396.0px;width:328.0px;height:26.0px;background:#f7f7f7;border-radius:0px"></div>
<div style="position:absolute;left:543.0px;top:448.0px;width:328.0px;height:2.0px;background:#f7f7f7;border-radius:0px"></div>
<div style="position:absolute;left:543.0px;top:292.0px;width:128.8px;height:26.0px;background:#bfd9f6;border-radius:0px"></div>
<div style="position:absolute;left:873.4px;top:293.8px;width:9.6px;height:62.2px;background:#b9b9b9;border-radius:4.8px"></div>
<div style="position:absolute;left:543.3px;top:454.0px;width:29.5px;height:27.6px;background:#b9b9b9;border-radius:3px"></div>
<div style="position:absolute;left:543.3px;top:486.3px;width:29.5px;height:27.4px;background:#b9b9b9;border-radius:3px"></div>
<svg style="position:absolute;left:551.5px;top:462.8px" width="13" height="12" viewBox="0 0 13 12"><path d="M0.9 0.7 L12.1 11.3 M12.1 0.7 L0.9 11.3" stroke="#111" stroke-width="1.7"/></svg>
<svg style="position:absolute;left:551.5px;top:494.9px" width="13" height="12" viewBox="0 0 13 12"><path d="M0.9 0.7 L12.1 11.3 M12.1 0.7 L0.9 11.3" stroke="#111" stroke-width="1.7"/></svg>
<div style="position:absolute;left:543.3px;top:518.0px;width:341.9px;height:104.0px;background:#eaeaea;border-radius:0px"></div>
<div style="position:absolute;left:543.3px;top:518.0px;width:341.9px;height:26.0px;background:#f7f7f7;border-radius:0px"></div>
<div style="position:absolute;left:543.3px;top:570.0px;width:341.9px;height:26.0px;background:#f7f7f7;border-radius:0px"></div>
<div style="position:absolute;left:385.2px;top:628.3px;width:47.5px;height:27.2px;background:#b9b9b9;border-radius:3px"></div>
<div style="position:absolute;left:441.2px;top:628.3px;width:34.6px;height:27.2px;background:#b9b9b9;border-radius:3px"></div>
<svg style="position:absolute;left:869px;top:180px" width="17" height="17" viewBox="0 0 17 17"><path d="M1.5 1.5 L15 15 M15 1.5 L1.5 15" stroke="#111" stroke-width="1.35"/></svg>
<div class="t" style="left:381.6px;top:182.0px;color:#111;transform:scaleX(0.999)">Multisearch Parts</div>
<div class="t" style="left:385.1px;top:214.4px;color:#111;transform:scaleX(1.015)">Find networks that are common between multiple parts.</div>
<div class="t" style="left:384.0px;top:265.0px;color:#111;transform:scaleX(1.056)">Part</div>
<div class="t" style="left:546.8px;top:268.4px;color:#9a9a9a;transform:scaleX(0.986)">Part name...</div>
<div class="t" style="left:776.2px;top:267.4px;color:#111;transform:scaleX(1.020)">Add</div>
<div class="t" style="left:542.8px;top:298.6px;color:#111;transform:scaleX(0.957)">J3001</div>
<div class="t" style="left:542.8px;top:324.5px;color:#111;transform:scaleX(0.962)">JB200</div>
<div class="t" style="left:542.8px;top:350.5px;color:#111;transform:scaleX(0.962)">JB201</div>
<div class="t" style="left:542.8px;top:376.5px;color:#111;transform:scaleX(1.007)">NULL component</div>
<div class="t" style="left:542.9px;top:402.6px;color:#111;transform:scaleX(0.931)">PP9804</div>
<div class="t" style="left:542.9px;top:428.6px;color:#111;transform:scaleX(0.917)">R0553</div>
<div class="t" style="left:384.8px;top:459.6px;color:#111;transform:scaleX(0.979)">Selected Parts</div>
<div class="t" style="left:580.5px;top:462.0px;color:#111;transform:scaleX(0.953)">U0500</div>
<div class="t" style="left:580.5px;top:493.6px;color:#111;transform:scaleX(0.957)">UB400</div>
<div class="t" style="left:384.8px;top:523.0px;color:#111;transform:scaleX(1.009)">Matching Networks</div>
<div class="t" style="left:542.4px;top:524.7px;color:#111;transform:scaleX(0.895)">TBT_POC_RESET</div>
<div class="t" style="left:542.4px;top:550.8px;color:#111;transform:scaleX(0.915)">TBT_T_CIO_PWR_EN</div>
<div class="t" style="left:542.4px;top:576.6px;color:#111;transform:scaleX(0.917)">TBT_T_USB_PWR_EN</div>
<div class="t" style="left:542.4px;top:602.4px;color:#111;transform:scaleX(0.904)">XDP_USB_EXTD_OC_L</div>
<div class="t" style="left:388.8px;top:635.8px;color:#111;transform:scaleX(0.950)">Reset</div>
<div class="t" style="left:444.7px;top:635.8px;color:#111;transform:scaleX(1.001)">Exit</div>
</div>
</body></html>
